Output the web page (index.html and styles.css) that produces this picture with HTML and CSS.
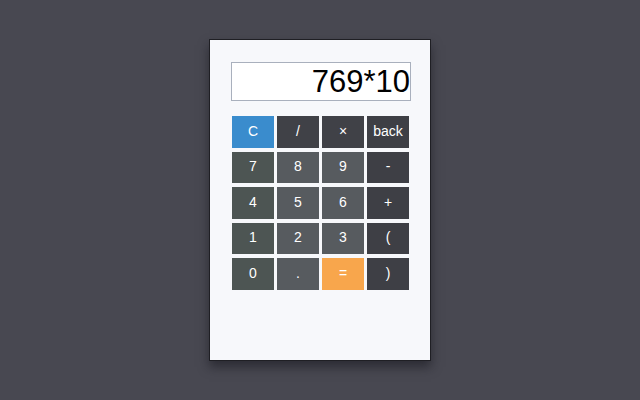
FILE: index.html
```html
<!DOCTYPE html>
<html lang="en">
<head>
  <meta charset="UTF-8">
  <title>Calculator</title>
  <link rel="stylesheet" href="styles.css">
</head>
<body>

  <div class="calc">
    <input type="text" class="screen" value="769*10" readonly>

    <div class="keys">
      <button class="key clear">C</button>
      <button class="key op">/</button>
      <button class="key op">&times;</button>
      <button class="key op dark">back</button>

      <button class="key num first">7</button>
      <button class="key num">8</button>
      <button class="key num">9</button>
      <button class="key op dark">-</button>

      <button class="key num first">4</button>
      <button class="key num">5</button>
      <button class="key num">6</button>
      <button class="key op dark">+</button>

      <button class="key num first">1</button>
      <button class="key num">2</button>
      <button class="key num">3</button>
      <button class="key op dark">(</button>

      <button class="key num first">0</button>
      <button class="key num">.</button>
      <button class="key equals">=</button>
      <button class="key op dark">)</button>
    </div>
  </div>

</body>
</html>
```

FILE: styles.css
```css
body {
  background-color: #484851;
  font-family: "Liberation Sans", Arial, sans-serif;
  margin: 0;
  height: 400px;
  display: flex;
  justify-content: center;
  padding-top: 39px;
  box-sizing: border-box;
}

.calc {
  width: 222px;
  height: 322px;
  background: #f7f8fb;
  border: 1px solid #1f1f24;
  box-shadow: 0 6px 10px rgba(20, 20, 28, 0.55);
  padding: 22px 20px 0 21px;
  box-sizing: border-box;
}

.screen {
  display: block;
  width: 180px;
  height: 39px;
  box-sizing: border-box;
  border: 1px solid #a9b0bd;
  background: #fff;
  padding: 0 0 0 4px;
  font-family: "Liberation Sans", Arial, sans-serif;
  font-size: 31px;
  color: #000;
  text-align: right;
  outline: none;
}

.keys {
  display: grid;
  grid-template-columns: repeat(4, 42px);
  grid-auto-rows: 31.5px;
  column-gap: 3px;
  row-gap: 4px;
  margin-top: 15px;
  margin-left: 1px;
}

.key {
  border: none;
  padding: 0 0 2px;
  font-family: "Liberation Sans", Arial, sans-serif;
  font-size: 14px;
  color: #fff;
  cursor: pointer;
}

.clear { background: #3a8ccd; }
.op { background: #404147; }
.op.dark { background: #3e3f45; }
.num { background: #575b5f; }
.num.first { background: #4d5553; }
.equals { background: #f8a64c; }
```
